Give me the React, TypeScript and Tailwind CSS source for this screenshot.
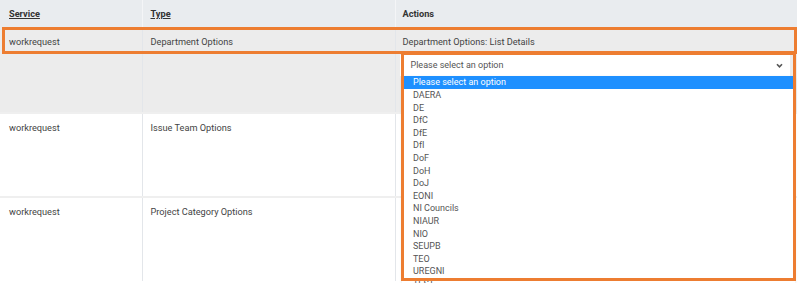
import React from 'react';

const departments = [
  'DAERA',
  'DE',
  'DfC',
  'DfE',
  'DfI',
  'DoF',
  'DoH',
  'DoJ',
  'EONI',
  'NI Councils',
  'NIAUR',
  'NIO',
  'SEUPB',
  'TEO',
  'UREGNI',
  'TEST',
];

const rows = [
  { service: 'workrequest', type: 'Department Options', active: true },
  { service: 'workrequest', type: 'Issue Team Options', active: false },
  { service: 'workrequest', type: 'Project Category Options', active: false },
];

const App: React.FC = () => {
  return (
    <div className="relative w-[801px] h-[283px] overflow-hidden bg-white font-['Roboto',sans-serif] text-[9.2px] text-[#444]">
      <table className="w-[797px] table-fixed border-collapse">
        <colgroup>
          <col className="w-[142px]" />
          <col className="w-[253px]" />
          <col />
        </colgroup>
        <thead>
          <tr className="h-[28px] bg-[#e9ecef] text-left text-[#333]">
            <th className="px-[9px] font-bold underline">Service</th>
            <th className="px-[8px] font-bold underline border-l border-[#f4f5f7]">Type</th>
            <th className="px-[7px] font-bold border-l border-[#f4f5f7]">Actions</th>
          </tr>
        </thead>
        <tbody>
          {rows.map((row, index) => (
            <tr
              key={index}
              className={`align-top ${row.active ? 'h-[85px] bg-[#ececec]' : 'h-[84px] bg-white border-t-2 border-[#efefef]'}`}
            >
              <td className="px-[9px] pt-[7px]">{row.service}</td>
              <td className="px-[8px] pt-[7px] border-l border-[#e3e6ea]">{row.type}</td>
              <td className="px-[7px] pt-[7px] border-l border-[#e3e6ea]">
                {row.active && (
                  <div className="flex flex-col">
                    <span>Department Options: List Details</span>
                    <div className="mt-[6px] -ml-[3px] h-[21px] bg-white flex items-center justify-between pl-[11px] pr-[7px] text-[9px] text-[#555]">
                      <span>Please select an option</span>
                      <svg width="7" height="5" viewBox="0 0 8 6">
                        <path d="M1 1.5 L4 4.5 L7 1.5" stroke="#555" strokeWidth="2" fill="none" />
                      </svg>
                    </div>
                  </div>
                )}
              </td>
            </tr>
          ))}
        </tbody>
      </table>

      {/* open native dropdown list */}
      <div className="absolute left-[402px] top-[76px] w-[393px] bg-white text-[9px] text-[#555] leading-[12.6px] shadow-sm">
        <div className="bg-[#1e90ff] text-white pl-[11px] h-[13px]">Please select an option</div>
        {departments.map((d) => (
          <div key={d} className="pl-[11px] h-[12.6px]">
            {d}
          </div>
        ))}
      </div>

      {/* annotation boxes */}
      <div className="absolute left-[2px] top-[27px] w-[795px] h-[27px] border-[3px] border-[#ed7d31]" />
      <div className="absolute left-[401px] top-[52px] w-[395px] h-[229px] border-[3px] border-[#ed7d31]" />
    </div>
  );
};

export default App;
